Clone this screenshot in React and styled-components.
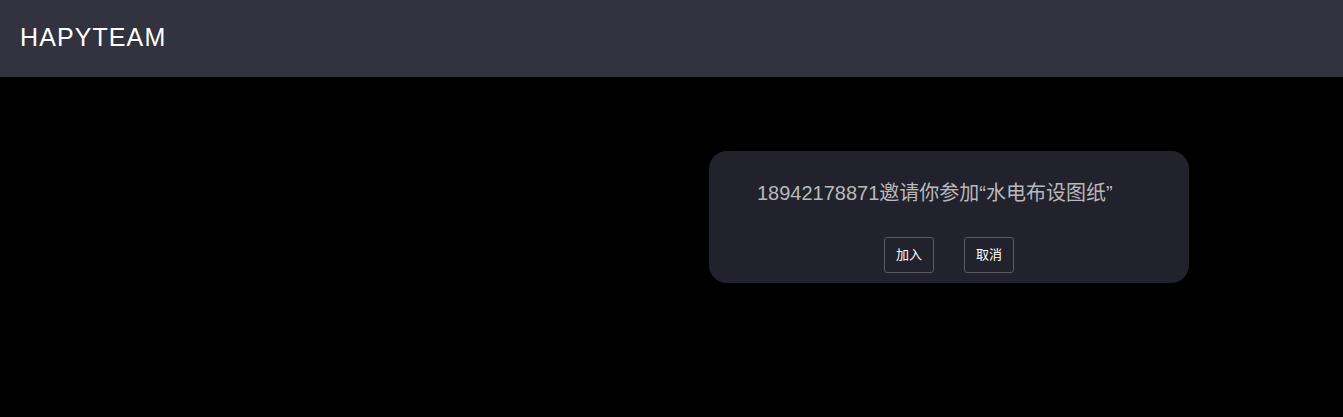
import styled, { createGlobalStyle } from "styled-components";

const GlobalStyle = createGlobalStyle`
  html, body {
    margin: 0;
    padding: 0;
    background-color: #000;
    font-family: "Liberation Sans", Arial, "Noto Sans CJK SC", sans-serif;
  }
`;

const Page = styled.div`
  min-height: 417px;
  background-color: #000;
`;

const Header = styled.header`
  height: 77px;
  box-sizing: border-box;
  background-color: #33333f;
  display: flex;
  align-items: center;
  padding: 0 0 3px 20px;
`;

const Logo = styled.h1`
  margin: 0;
  font-size: 25px;
  font-weight: 400;
  letter-spacing: 1.1px;
  color: #fff;
`;

const Main = styled.main`
  padding-top: 74px;
  padding-left: 709px;
`;

const InviteCard = styled.div`
  width: 480px;
  height: 132px;
  box-sizing: border-box;
  background-color: #22222c;
  border-radius: 18px;
  padding: 28px 48px 0;
  display: flex;
  flex-direction: column;
`;

const Message = styled.p`
  margin: 0;
  font-size: 20px;
  line-height: 28px;
  color: #b9b9bd;
`;

const Actions = styled.div`
  display: flex;
  justify-content: center;
  gap: 30px;
  margin-top: 30px;
`;

const ActionButton = styled.button`
  width: 50px;
  height: 36px;
  box-sizing: border-box;
  background: transparent;
  border: 1px solid #5a5a62;
  border-radius: 3px;
  color: #fff;
  font-size: 13px;
  font-family: "Liberation Sans", Arial, "Noto Sans CJK SC", sans-serif;
  padding: 0 0 3px;
  cursor: pointer;
`;

const App = () => {
  return (
    <Page>
      <GlobalStyle />
      <Header>
        <Logo>HAPYTEAM</Logo>
      </Header>
      <Main>
        <InviteCard>
          <Message>18942178871邀请你参加“水电布设图纸”</Message>
          <Actions>
            <ActionButton>加入</ActionButton>
            <ActionButton>取消</ActionButton>
          </Actions>
        </InviteCard>
      </Main>
    </Page>
  );
};

export default App;
